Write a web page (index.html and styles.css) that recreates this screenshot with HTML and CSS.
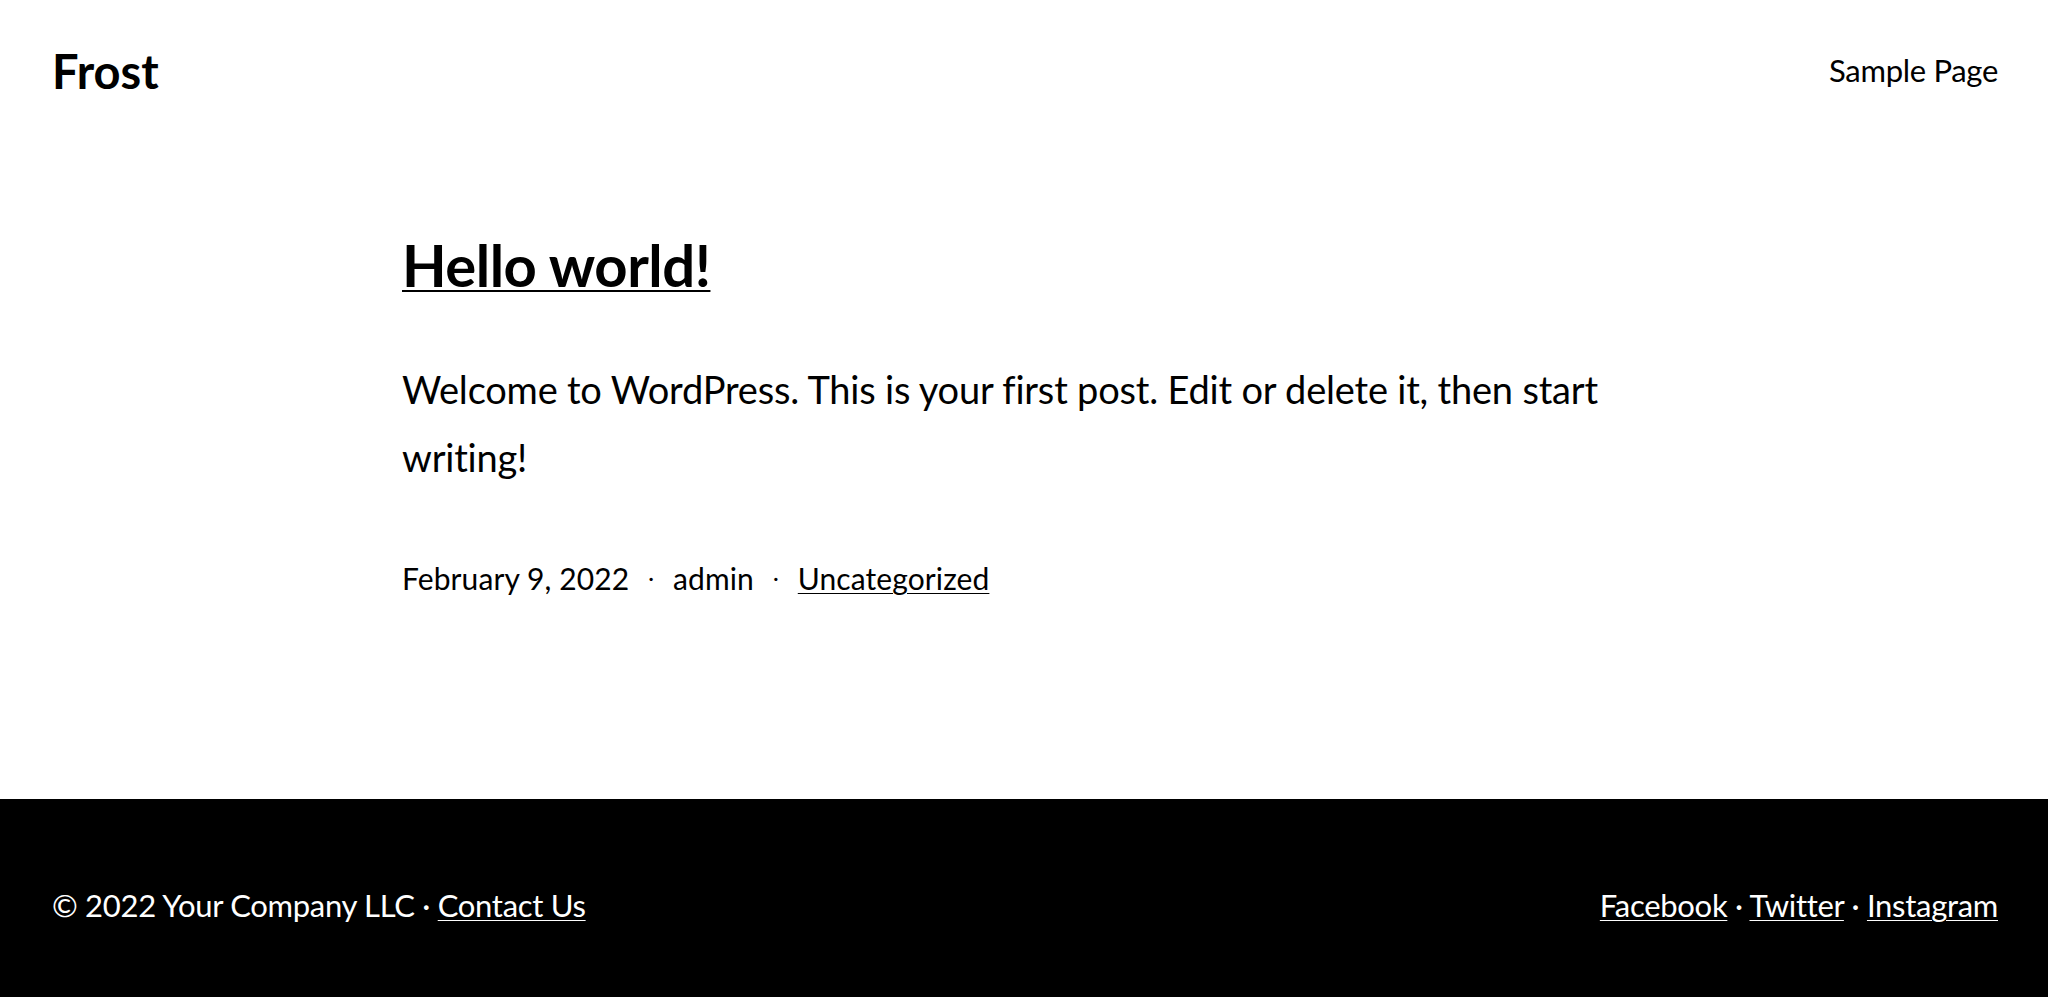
FILE: index.html
```html
<!DOCTYPE html>
<html lang="en">
<head>
<meta charset="utf-8">
<title>Frost</title>
<link rel="stylesheet" href="styles.css">
</head>
<body>
<header class="site-header">
  <a class="site-title" href="#">Frost</a>
  <nav class="site-nav"><a href="#">Sample Page</a></nav>
</header>
<main class="site-main">
  <article class="post">
    <h2 class="post-title"><a href="#">Hello world!</a></h2>
    <p class="post-content">Welcome to WordPress. This is your first post. Edit or delete it, then start writing!</p>
    <div class="post-meta">
      <span>February 9, 2022</span>
      <span class="sep">·</span>
      <span>admin</span>
      <span class="sep">·</span>
      <a href="#">Uncategorized</a>
    </div>
  </article>
</main>
<footer class="site-footer">
  <p class="footer-left">© 2022 Your Company LLC · <a href="#">Contact Us</a></p>
  <p class="footer-right"><a href="#">Facebook</a> · <a href="#">Twitter</a> · <a href="#">Instagram</a></p>
</footer>
</body>
</html>
```
FILE: styles.css
```css
* { box-sizing: border-box; }
html, body { margin: 0; padding: 0; }
body {
  font-family: Lato, "Open Sans", sans-serif;
  color: #000;
  background: #fff;
}
a { color: inherit; }

.site-header {
  display: flex;
  justify-content: space-between;
  align-items: center;
  min-height: 142px;
  padding: 0 50px 0 52px;
}
.site-title {
  font-size: 47px;
  font-weight: 700;
  text-decoration: none;
  line-height: 1.2;
}
.site-nav a {
  font-size: 31px;
  text-decoration: none;
  line-height: 1.2;
  letter-spacing: -0.3px;
}

.site-main {
  padding: 88px 0 196px;
}
.post {
  width: 1244px;
  margin: 0 auto;
}
.post-title {
  margin: 0;
  font-size: 58px;
  font-weight: 700;
  line-height: 1.2;
  letter-spacing: -0.5px;
}
.post-title a {
  text-decoration: underline;
  text-decoration-thickness: 2px;
  text-underline-offset: 3px;
}
.post-content {
  margin: 55px 0 0;
  font-size: 38px;
  line-height: 68px;
  letter-spacing: -0.2px;
}
.post-meta {
  margin-top: 66px;
  display: flex;
  align-items: baseline;
  gap: 19px;
  font-size: 30px;
  line-height: 42px;
  letter-spacing: 0.1px;
}
.post-meta a {
  text-decoration-thickness: 1px;
  text-underline-offset: 3px;
}
.post-meta .sep { position: relative; top: -4px; font-size: 22px; }

.site-footer {
  display: flex;
  justify-content: space-between;
  background: #000;
  color: #fff;
  padding: 88px 50px 78px 52px;
  font-size: 31px;
  line-height: 36px;
  letter-spacing: -0.3px;
}
.site-footer p { margin: 0; }
.site-footer a {
  text-decoration-thickness: 1px;
  text-underline-offset: 3px;
}
```
